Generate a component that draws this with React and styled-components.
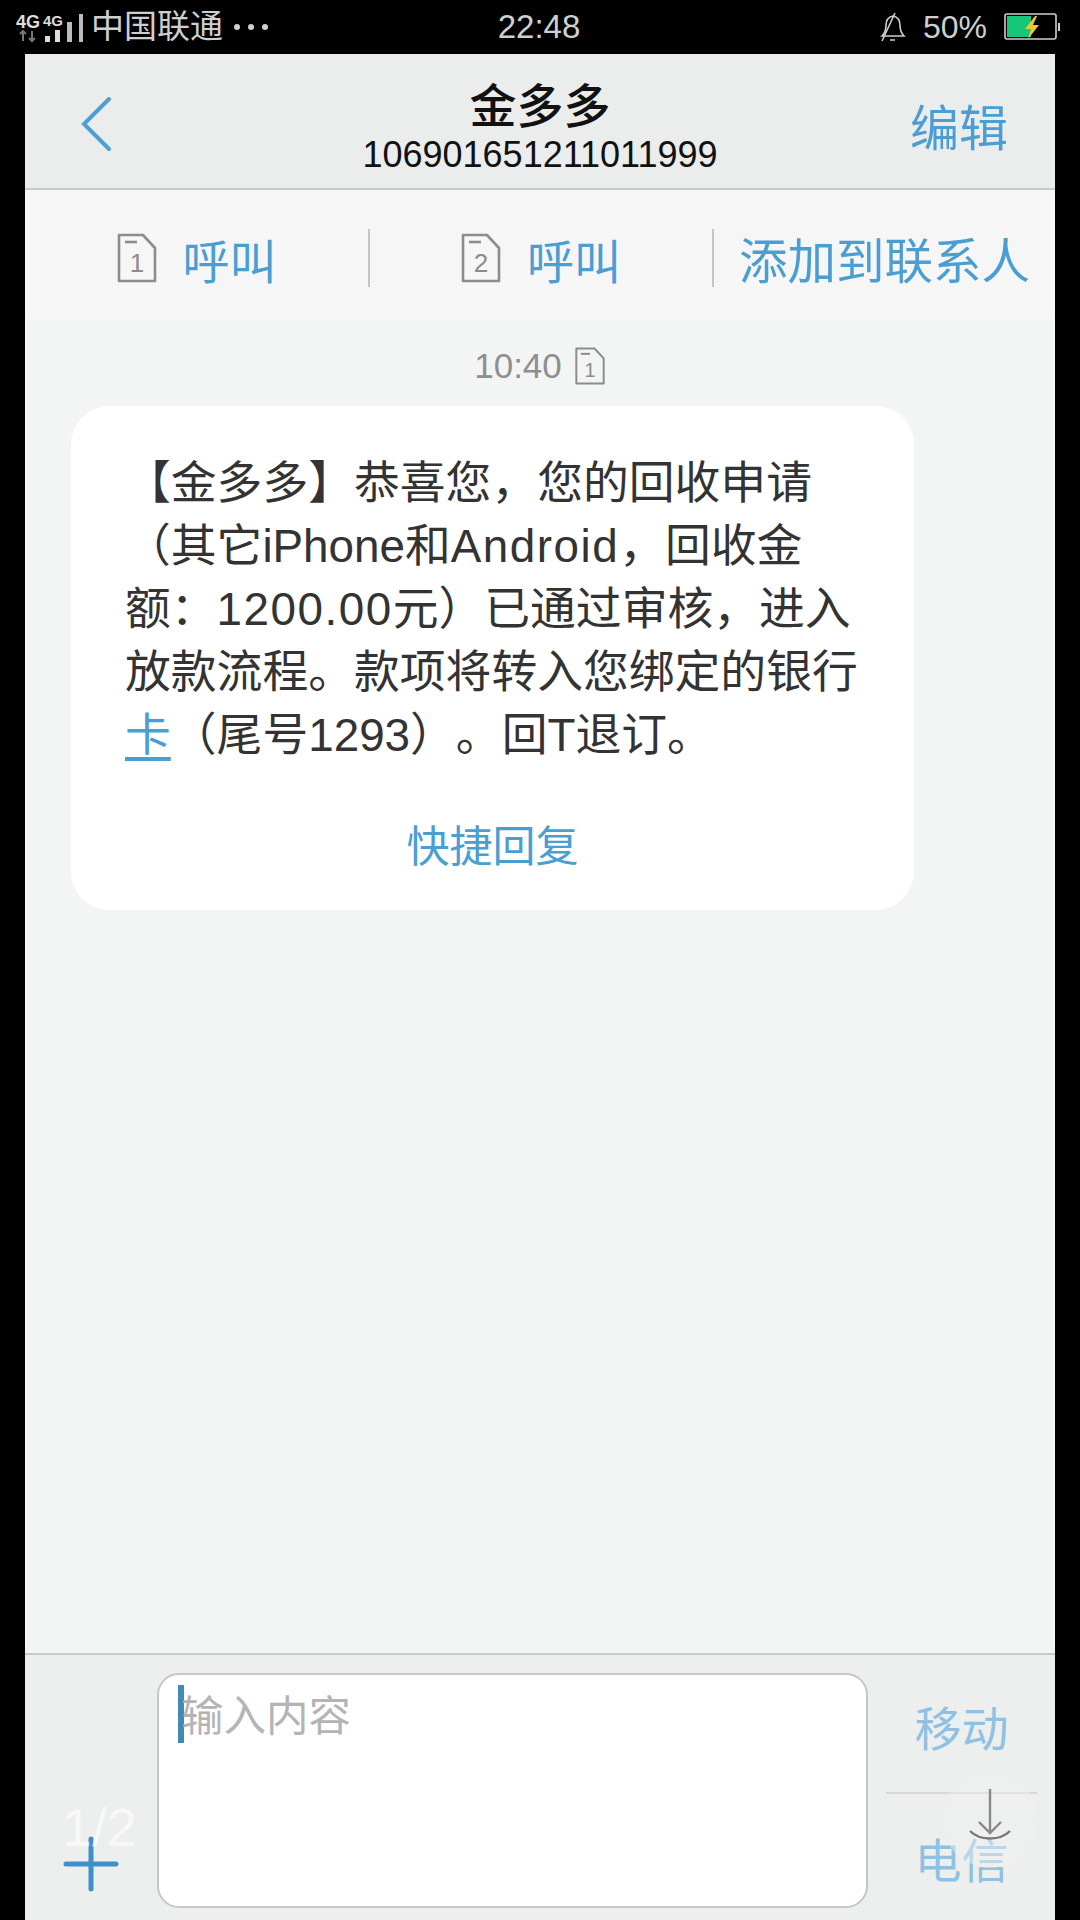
import React from "react";
import styled, { createGlobalStyle } from "styled-components";

const blue = "#4b9ed2";
const latin = `"Liberation Sans", "Noto Sans CJK SC", sans-serif`;

const Global = createGlobalStyle`
    html, body {
        margin: 0;
        padding: 0;
        background: #000;
        font-family: ${latin};
    }
`;

const Page = styled.div`
    width: 1080px;
    height: 1920px;
    background: #000;
    display: flex;
    flex-direction: column;
    overflow: hidden;
`;

/* status bar */
const StatusBar = styled.div`
    height: 54px;
    flex: none;
    display: grid;
    grid-template-columns: 1fr auto 1fr;
    align-items: center;
    padding: 0 20px 0 15px;
    color: #cfcfcf;
`;
const StatusLeft = styled.div`
    display: flex;
    align-items: center;
`;
const StatusRight = styled.div`
    display: flex;
    align-items: center;
    justify-content: flex-end;
`;
const Carrier = styled.span`
    font-size: 33px;
    margin-left: 6px;
    line-height: 54px;
`;
const Dots = styled.span`
    display: flex;
    gap: 8px;
    margin-left: 11px;
`;
const Dot = styled.i`
    width: 6px;
    height: 6px;
    border-radius: 50%;
    background: #cfcfcf;
`;
const Clock = styled.span`
    font-size: 33px;
    margin-left: 3px;
`;
const Percent = styled.span`
    font-size: 32px;
    margin: 0 17px 0 16px;
`;

/* app panel */
const Screen = styled.div`
    flex: 1;
    margin: 0 25px;
    background: #f3f4f4;
    display: flex;
    flex-direction: column;
    position: relative;
`;
const Header = styled.header`
    height: 136px;
    flex: none;
    box-sizing: border-box;
    background: #ebecec;
    border-bottom: 2px solid #c8c9c9;
    display: grid;
    grid-template-columns: 1fr auto 1fr;
    align-items: center;
    padding: 0 47px;
`;
const Back = styled.svg`
    display: block;
    width: 32px;
    height: 58px;
    margin: 6px 0 0 8px;
`;
const TitleBlock = styled.div`
    display: flex;
    flex-direction: column;
    align-items: center;
    color: #111;
    margin-top: 10px;
`;
const Title = styled.div`
    font-size: 47px;
    font-weight: 500;
    line-height: 58px;
`;
const Number = styled.div`
    font-size: 36px;
    line-height: 38px;
`;
const Edit = styled.div`
    justify-self: end;
    font-size: 49px;
    color: ${blue};
    margin-top: 6px;
`;

const Actions = styled.div`
    height: 129px;
    flex: none;
    background: #f6f6f6;
    display: grid;
    grid-template-columns: 345px 344px 1fr;
    align-items: start;
    padding-top: 39px;
    box-sizing: border-box;
`;
const Action = styled.div`
    height: 58px;
    display: flex;
    align-items: center;
    justify-content: center;
    gap: 26px;
    font-size: ${(p) => (p.$last ? 48.5 : 47)}px;
    color: ${blue};
    border-right: ${(p) => (p.$last ? "none" : "2px solid #c4c4c4")};
    white-space: nowrap;
`;
const SimSvg = styled.svg`
    display: block;
    flex: none;
`;
const SimDigit = styled.text`
    font-family: ${latin};
    font-size: ${(p) => p.$size}px;
    fill: #8c8c8c;
    text-anchor: middle;
`;

const Thread = styled.main`
    flex: 1;
    min-height: 0;
    padding: 0 0 0 46px;
`;
const TimeRow = styled.div`
    display: flex;
    align-items: center;
    justify-content: center;
    gap: 12px;
    height: 46px;
    margin: 24px 0 17px -46px;
    color: #8f8f8f;
    font-size: 35px;
`;
const Bubble = styled.div`
    width: 843px;
    height: 504px;
    box-sizing: border-box;
    background: #fff;
    border-radius: 38px;
    padding: 46px 40px 0 54px;
`;
const Message = styled.p`
    margin: 0;
    font-size: 45.8px;
    line-height: 63px;
    color: #333;
    white-space: nowrap;
    text-spacing-trim: space-all;
`;
const Wide = styled.span`
    letter-spacing: 1.5px;
`;
const Link = styled.span`
    color: ${blue};
    text-decoration: underline;
    text-underline-offset: 6px;
`;
const QuickReply = styled.div`
    margin: 50px -40px 0 -54px;
    text-align: center;
    font-size: 43px;
    line-height: 60px;
    color: ${blue};
`;

/* composer */
const Composer = styled.footer`
    height: 267px;
    flex: none;
    box-sizing: border-box;
    background: #edeeee;
    border-top: 2px solid #c8c9c9;
    display: grid;
    grid-template-columns: 132px 711px 1fr;
    padding-top: 18px;
`;
const PlusCell = styled.div`
    display: flex;
    align-items: flex-end;
    justify-content: center;
    padding-bottom: 28px;
`;
const Input = styled.div`
    height: 235px;
    box-sizing: border-box;
    background: #fff;
    border: 2px solid #c6c6c6;
    border-radius: 22px;
    padding: 10px 0 0 19px;
    display: flex;
    align-items: flex-start;
`;
const Caret = styled.i`
    width: 6px;
    height: 58px;
    flex: none;
    background: #4488b4;
`;
const Placeholder = styled.span`
    font-size: 42.5px;
    line-height: 56px;
    margin: 4px 0 0 -3px;
    color: #b4b4b4;
`;
const Carriers = styled.div`
    display: flex;
    flex-direction: column;
    align-items: center;
    padding: 0 18px;
`;
const CarrierBtn = styled.div`
    height: ${(p) => p.$h}px;
    display: flex;
    align-items: center;
    justify-content: center;
    width: 100%;
    font-size: 47px;
    color: #8fc2e2;
    padding-bottom: ${(p) => (p.$line ? 14 : 0)}px;
    border-bottom: ${(p) => (p.$line ? "2px solid #d8d8d8" : "none")};
    box-sizing: border-box;
`;

/* floating overlays */
const PageCount = styled.div`
    position: absolute;
    left: 37px;
    bottom: 62px;
    font-size: 54px;
    color: rgba(255, 255, 255, 0.6);
`;
const Fab = styled.div`
    position: absolute;
    right: 17px;
    bottom: 52px;
    width: 96px;
    height: 96px;
    border-radius: 50%;
    background: rgba(240, 240, 240, 0.45);
    display: flex;
    align-items: center;
    justify-content: center;
`;
const FabIcon = styled.svg`
    display: block;
    margin-top: -10px;
`;

const Signal = () => (
    <svg width="70" height="36" viewBox="0 0 70 36">
        <text x="1" y="19" fontFamily="Liberation Sans" fontWeight="700" fontSize="18" fill="#ddd">4G</text>
        <text x="28" y="17" fontFamily="Liberation Sans" fontWeight="700" fontSize="15" fill="#ddd">4G</text>
        <path d="M8 32V22M5 25l3-3 3 3M17 22v10M14 29l3 3 3-3" stroke="#777" strokeWidth="2" fill="none" />
        <rect x="30" y="27" width="5" height="6" fill="#ddd" />
        <rect x="40" y="21" width="5" height="12" fill="#ddd" />
        <rect x="52" y="13" width="5" height="20" fill="#bbb" />
        <rect x="64" y="5" width="4" height="28" fill="#bbb" />
    </svg>
);

const Bell = () => (
    <svg width="28" height="30" viewBox="0 0 28 30" fill="none" stroke="#cfcfcf" strokeWidth="1.6">
        <path d="M3 24c3-3 4-7 4-11 0-5 3-8 7-9 4 1 7 4 7 9 0 4 1 8 4 11z" />
        <path d="M16 1L3 29M11 28h5" />
    </svg>
);

const Battery = () => (
    <svg width="56" height="28" viewBox="0 0 56 28">
        <rect x="1" y="1" width="51" height="25" rx="2" fill="none" stroke="#cfcfcf" strokeWidth="1.6" />
        <rect x="3" y="3" width="24" height="21" fill="#16c77a" />
        <rect x="54" y="10" width="2" height="8" fill="#cfcfcf" />
        <path d="M31 3L21 16h6l-3 10 11-14h-6l4-9z" fill="#e9c92e" />
    </svg>
);

const Sim = ({ n, w = 40, h = 50, size = 26 }) => (
    <SimSvg width={w} height={h} viewBox="0 0 40 50" fill="none" stroke="#8c8c8c" strokeWidth="2.6" strokeLinejoin="round">
        <path d="M2 2h24l12 13v33H2z" />
        <path d="M8 9h12" />
        <SimDigit x="20" y="39" stroke="none" $size={size}>{n}</SimDigit>
    </SimSvg>
);

const App = () => {
    return (
        <Page>
            <Global />
            <StatusBar>
                <StatusLeft>
                    <Signal />
                    <Carrier>中国联通</Carrier>
                    <Dots><Dot /><Dot /><Dot /></Dots>
                </StatusLeft>
                <Clock>22:48</Clock>
                <StatusRight>
                    <Bell />
                    <Percent>50%</Percent>
                    <Battery />
                </StatusRight>
            </StatusBar>
            <Screen>
                <Header>
                    <Back viewBox="0 0 32 58" fill="none" stroke="#4d9fd6" strokeWidth="4" strokeLinecap="round">
                        <path d="M29 4L4 29l25 25" />
                    </Back>
                    <TitleBlock>
                        <Title>金多多</Title>
                        <Number>106901651211011999</Number>
                    </TitleBlock>
                    <Edit>编辑</Edit>
                </Header>
                <Actions>
                    <Action><Sim n="1" />呼叫</Action>
                    <Action><Sim n="2" />呼叫</Action>
                    <Action $last>添加到联系人</Action>
                </Actions>
                <Thread>
                    <TimeRow>10:40<Sim n="1" w={32} h={38} /></TimeRow>
                    <Bubble>
                        <Message>
                            【金多多】恭喜您，您的回收申请<br />
                            （其它iPhone和<Wide>Android</Wide>，回收金<br />
                            额：<Wide>1200.00</Wide>元）已通过审核，进入<br />
                            放款流程。款项将转入您绑定的银行<br />
                            <Link>卡</Link>（尾号1293）。回T退订。
                        </Message>
                        <QuickReply>快捷回复</QuickReply>
                    </Bubble>
                </Thread>
                <Composer>
                    <PlusCell>
                        <svg width="56" height="56" viewBox="0 0 56 56" stroke="#3f8fc8" strokeWidth="5" strokeLinecap="round">
                            <path d="M28 3v50M3 28h50" />
                        </svg>
                    </PlusCell>
                    <Input>
                        <Caret />
                        <Placeholder>输入内容</Placeholder>
                    </Input>
                    <Carriers>
                        <CarrierBtn $h={121} $line>移动</CarrierBtn>
                        <CarrierBtn $h={126}>电信</CarrierBtn>
                    </Carriers>
                </Composer>
                <PageCount>1/2</PageCount>
                <Fab>
                    <FabIcon width="44" height="56" viewBox="0 0 44 56" fill="none" stroke="#888" strokeWidth="2.4">
                        <path d="M22 2v44M11 35l11 11 11-11" />
                        <path d="M2 44c10 10 30 10 40 0" stroke="#777" />
                    </FabIcon>
                </Fab>
            </Screen>
        </Page>
    );
};

export default App;
